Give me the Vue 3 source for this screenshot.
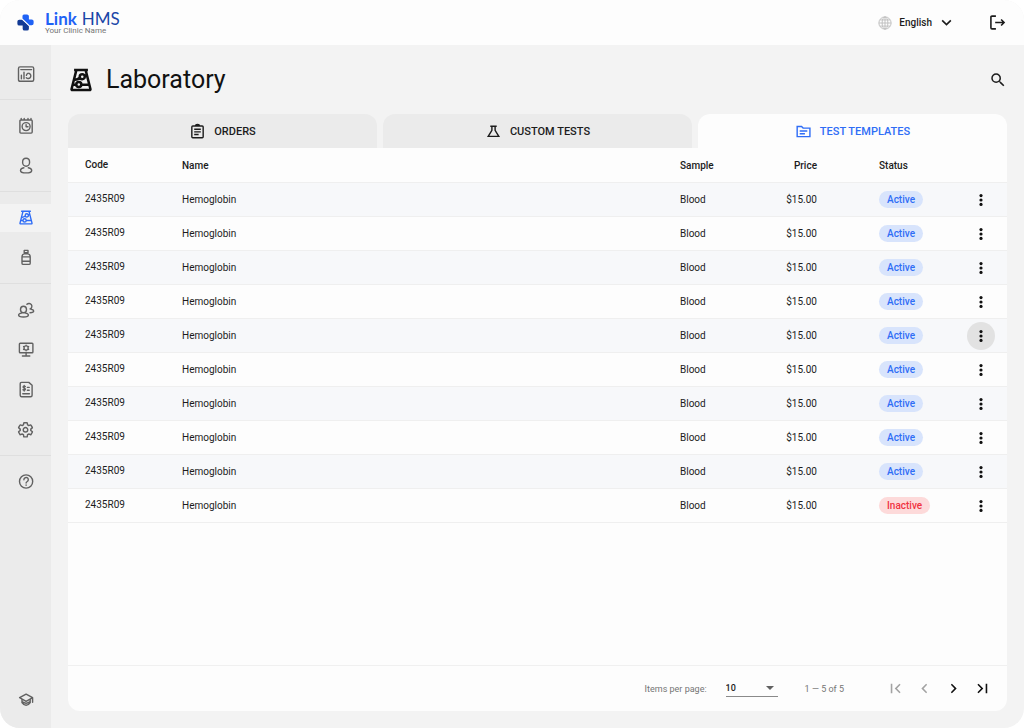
<template>
  <div class="app">
    <header class="topbar">
      <a href="#" class="brand">
        <svg class="brand-mark" viewBox="0 0 18 18">
          <path fill="#1f62f5" d="M7.4 0.400h3.200a2 2 0 0 1 2 2v3.400h3a2 2 0 0 1 2 2v2a2 2 0 0 1-2 2h-3L5.800 5.400V2a1.600 1.600 0 0 1 1.600-1.600z" />
          <path fill="#123a94" d="M2.400 6h3.200l7 6.400v3.200a2 2 0 0 1-2 2H8a2 2 0 0 1-2-2v-3.400H2.400a2 2 0 0 1-2-2V8a2 2 0 0 1 2-2z" />
          <path stroke="#fff" stroke-width="1.100" d="M5.300 5.200l7.600 7" />
        </svg>
        <span class="brand-text">
          <span class="brand-name"><b>Link</b><span>HMS</span></span>
          <span class="brand-sub">Your Clinic Name</span>
        </span>
      </a>
      <div class="topbar-actions">
        <button type="button" class="lang-button">
          <svg class="globe" viewBox="0 0 16 16">
            <circle cx="8" cy="8" r="7" />
            <ellipse cx="8" cy="8" rx="3.300" ry="7" />
            <path d="M8 1v14M1 8h14M2.200 4.500h11.600M2.200 11.500h11.600" />
          </svg>
          <span>English</span>
          <svg class="caret" viewBox="0 0 12 12"><path d="M2 4l4 4 4-4" /></svg>
        </button>
        <button type="button" class="icon-button" aria-label="Log out">
          <svg class="logout" viewBox="0 0 16 16">
            <path d="M6.500 2H2.800a1 1 0 0 0-1 1v10a1 1 0 0 0 1 1h3.700M5.800 8h8.400M11.400 5.200L14.200 8l-2.800 2.800" />
          </svg>
        </button>
      </div>
    </header>

    <div class="body">
      <nav class="sidebar">
        <div v-for="(group, i) in navGroups" :key="i" class="nav-group">
          <a
            v-for="item in group"
            :key="item.label"
            href="#"
            class="nav-item"
            :class="{ active: item.active }"
            :aria-label="item.label"
          >
            <svg class="nav-icon" :class="{ large: item.box }" :viewBox="item.box || '0 0 18 18'">
              <path :d="item.icon" />
            </svg>
          </a>
        </div>
      </nav>

      <main class="content">
        <div class="page-head">
          <svg class="page-icon" viewBox="2 1 14 15"><path :d="flask" /></svg>
          <h1>Laboratory</h1>
          <button type="button" class="icon-button search" aria-label="Search">
            <svg viewBox="0 0 24 24"><path d="M15.5 14h-.79l-.28-.27A6.471 6.471 0 0 0 16 9.5 6.5 6.5 0 1 0 9.5 16c1.61 0 3.09-.59 4.23-1.57l.27.28v.79l5 4.99L20.490 19l-4.990-5zm-6 0C7.010 14 5 11.990 5 9.500S7.010 5 9.500 5 14 7.010 14 9.500 11.990 14 9.500 14z" /></svg>
          </button>
        </div>

        <div class="tabs" role="tablist">
          <button
            v-for="tab in tabs"
            :key="tab.id"
            type="button"
            role="tab"
            class="tab"
            :class="{ active: tab.id === activeTab }"
            :aria-selected="tab.id === activeTab"
            @click="activeTab = tab.id"
          >
            <svg class="tab-icon" viewBox="0 0 18 18"><path :d="tab.icon" /></svg>
            <span>{{ tab.label }}</span>
          </button>
        </div>

        <section class="card">
          <table class="tests">
            <thead>
              <tr>
                <th class="col-code">Code</th>
                <th class="col-name">Name</th>
                <th class="col-sample">Sample</th>
                <th class="col-price">Price</th>
                <th class="col-status">Status</th>
                <th class="col-menu"></th>
              </tr>
            </thead>
            <tbody>
              <tr v-for="row in rows" :key="row.id">
                <td class="col-code">{{ row.code }}</td>
                <td class="col-name">{{ row.name }}</td>
                <td class="col-sample">{{ row.sample }}</td>
                <td class="col-price">{{ row.price }}</td>
                <td class="col-status">
                  <span class="badge" :class="row.status.toLowerCase()">{{ row.status }}</span>
                </td>
                <td class="col-menu">
                  <button type="button" class="row-menu" :class="{ focused: row.id === 5 }" aria-label="Row menu">
                    <svg viewBox="0 0 14 14">
                      <circle cx="7" cy="2.600" r="1.600" />
                      <circle cx="7" cy="7" r="1.600" />
                      <circle cx="7" cy="11.400" r="1.600" />
                    </svg>
                  </button>
                </td>
              </tr>
            </tbody>
          </table>

          <footer class="pager">
            <label for="page-size">Items per page:</label>
            <div class="select">
              <select id="page-size" v-model="pageSize">
                <option>10</option>
                <option>25</option>
                <option>50</option>
              </select>
              <svg viewBox="0 0 8 4"><path d="M0 0h8L4 4z" /></svg>
            </div>
            <span class="range">1 — 5 of 5</span>
            <div class="pager-buttons">
              <button v-for="btn in pagerButtons" :key="btn.label" type="button" :disabled="btn.disabled" :aria-label="btn.label">
                <svg viewBox="0 0 24 24"><path :d="btn.icon" /></svg>
              </button>
            </div>
          </footer>
        </section>
      </main>
    </div>
  </div>
</template>

<script setup>
import { ref } from 'vue';

const flask =
  'M4.600 2.200h8.800M6 2.400L3 14.200c-.1.400.1.700.5.700h11c.4 0 .6-.3.500-.7L12 2.400M11.400 6.400a1.600 1.600 0 1 1-3.200 0 1.600 1.600 0 1 1 3.200 0M9.200 11.400a1.600 1.600 0 1 1-3.200 0 1.600 1.600 0 1 1 3.200 0M9.200 11.500h4.600M4.200 11.500H6M5.200 8.400c1.400 0 2-.4 3-1.300M11.400 6.200l1-1';

const navGroups = [
  [
    {
      label: 'Dashboard',
      icon: 'M3 1.900h12.200q1.500 0 1.500 1.500v11.400q0 1.500-1.500 1.500H3q-1.500 0-1.500-1.500V3.400q0-1.500 1.500-1.500M3.800 4.600h10.800M4.400 10.300v3.500M7 7.300v6.500M11.800 8.200a2.700 2.700 0 1 1-2.500 4.600M9.400 10.300q.3-1.300 1.400-1.900',
    },
  ],
  [
    {
      label: 'Appointments',
      icon: 'M3.900 3h10.300q1 0 1 1v11.100q0 1-1 1H3.900q-1 0-1-1V4q0-1 1-1M4.200 1.500V3M7.200 1.500V3M11 1.500V3M14 1.500V3M13.100 9.600a4 4 0 1 1-8 0 4 4 0 1 1 8 0M9.100 7.600v2.200h1.900',
    },
    {
      label: 'Patients',
      icon: 'M12.600 5.200c0 2.200-1.500 4-3.500 4s-3.500-1.800-3.500-4 1.500-3.900 3.500-3.900 3.500 1.700 3.500 3.900M6.900 10.800c-2 .4-3.400 1.400-3.400 2.600 0 1.600 2.600 2.500 5.600 2.500s5.600-.9 5.600-2.500c0-1.200-1.400-2.200-3.400-2.600',
    },
  ],
  [
    { label: 'Laboratory', active: true, icon: flask },
    {
      label: 'Pharmacy',
      icon: 'M7.200 1.400h3.800v2.400H7.200zM7 4.900h4.200q2 .6 2 2.800v6.500q0 1.200-1.200 1.200H6.200q-1.200 0-1.200-1.200V7.700q0-2.200 2-2.800M5 7.900h8.200M5 12.300h8.200',
    },
  ],
  [
    {
      label: 'Staff',
      icon: 'M9.500 8.500a3 3.200 0 1 1-6 0 3 3.200 0 1 1 6 0M4.500 12.100c-1.900.3-2.900 1-2.900 1.900 0 1.300 2.200 2 4.900 2s4.900-.7 4.900-2c0-.9-1-1.600-2.900-1.900M9.900 3.300a2.900 2.900 0 1 1 3.200 4.700M14.300 8.200c1.500.3 2.400 1 2.400 1.800 0 1-1.500 1.700-3.700 1.700',
    },
    {
      label: 'Devices',
      icon: 'M3.200 2.300h11.900q.8 0 .8.800v7.800q0 .8-.8.800H3.200q-.8 0-.8-.8V3.100q0-.8.800-.8M9.100 11.800v3M5.400 15h7.400M11.200 7a2.100 2.100 0 1 1-4.200 0 2.100 2.100 0 1 1 4.200 0M9.100 4.200v.7M9.100 9.100v.7M6.600 5.600l.6.300M11 8.100l.6.300M6.600 8.400l.6-.3M11 5.900l.6-.3',
    },
    {
      label: 'Billing',
      icon: 'M4.500 1.400h7.300l3.300 2.900v10q0 1.500-1.500 1.500H4.700q-1.500 0-1.500-1.500V2.900q0-1.500 1.300-1.500M5.800 12.700h6.600M10.400 6.400h1.800M10.400 9.200h1.800M8.300 5.600c-.6-.6-2.200-.5-2.200.5 0 1.200 2.300.8 2.300 2.100 0 1.100-1.700 1.200-2.400.5M7.200 4.400v5.600',
    },
    {
      label: 'Settings',
      box: '0 1 24 24',
      icon: 'M19.430 12.980c.04-.32.07-.64.07-.98 0-.34-.03-.66-.07-.98l2.110-1.650c.19-.15.24-.42.12-.64l-2-3.460c-.09-.16-.26-.25-.44-.25-.06 0-.12.01-.17.03l-2.490 1c-.52-.4-1.080-.73-1.690-.98l-.38-2.650C14.460 2.180 14.250 2 14 2h-4c-.25 0-.46.18-.49.42l-.38 2.650c-.61.25-1.170.59-1.690.98l-2.490-1c-.06-.02-.12-.03-.18-.03-.17 0-.34.09-.43.25l-2 3.460c-.13.22-.07.49.12.64l2.110 1.650c-.04.32-.07.65-.07.98 0 .33.03.66.07.98l-2.110 1.650c-.19.15-.24.42-.12.64l2 3.460c.09.16.26.25.44.25.06 0 .12-.01.17-.03l2.490-1c.52.4 1.080.73 1.690.98l.38 2.650c.03.24.24.42.49.42h4c.25 0 .46-.18.49-.42l.38-2.650c.61-.25 1.170-.59 1.690-.98l2.490 1c.06.02.12.03.18.03.17 0 .34-.09.43-.25l2-3.460c.12-.22.07-.49-.12-.64zM15.200 12a3.200 3.200 0 1 1-6.400 0 3.200 3.200 0 1 1 6.400 0',
    },
  ],
  [
    {
      label: 'Help',
      icon: 'M15.700 8.500a6.600 6.600 0 1 1-13.200 0 6.600 6.600 0 1 1 13.200 0M6.900 6.700a2.200 2.200 0 1 1 3.400 1.800c-.8.500-1.200.9-1.200 1.500M9.100 12v.2',
    },
  ],
  [
    {
      label: 'Academy',
      icon: 'M9.100 3.200l6.500 3.500-6.500 3.600-6.500-3.600zM5 8.100v3.600c1 1.600 2.400 2.500 4.100 2.500s3.100-.9 4.100-2.500V8.100M15.600 6.800v4.400M5 10.600c2.600 2 5.600 2 8.200 0',
    },
  ],
];

const tabs = [
  {
    id: 'orders',
    label: 'ORDERS',
    icon: 'M4 3.200h10q1 0 1 1v10.400q0 1-1 1H4q-1 0-1-1V4.200q0-1 1-1M7 3.200a2 1.700 0 0 1 4 0M5.500 6.600h7M5.500 9.400h7M5.500 12.200h4.700',
  },
  {
    id: 'custom',
    label: 'CUSTOM TESTS',
    icon: 'M5.600 3.500h6.800M7.300 3.600v4.200L3.400 14.200h11.200l-3.900-6.400V3.600',
  },
  {
    id: 'templates',
    label: 'TEST TEMPLATES',
    icon: 'M2.300 3.700h4.600l1.700 1.700h7.200v9H2.300zM5 8.400h8M5 11.300h5.500',
  },
];
const activeTab = ref('templates');

const rows = Array.from({ length: 10 }, (_, i) => ({
  id: i + 1,
  code: '2435R09',
  name: 'Hemoglobin',
  sample: 'Blood',
  price: '$15.00',
  status: i === 9 ? 'Inactive' : 'Active',
}));

const pageSize = ref('10');
const pagerButtons = [
  { label: 'First page', disabled: true, icon: 'M18.410 16.590L13.820 12l4.590-4.590L17 6l-6 6 6 6zM6 6h2v12H6z' },
  { label: 'Previous page', disabled: true, icon: 'M15.410 7.410L14 6l-6 6 6 6 1.410-1.410L10.830 12z' },
  { label: 'Next page', disabled: false, icon: 'M10 6L8.590 7.410 13.170 12l-4.580 4.590L10 18l6-6z' },
  { label: 'Last page', disabled: false, icon: 'M5.590 7.410L10.180 12l-4.590 4.590L7 18l6-6-6-6zM16 6h2v12h-2z' },
];
</script>

<style>
body {
  background: #fff;
}
</style>

<style scoped>
.app {
  display: flex;
  flex-direction: column;
  min-height: 100vh;
  border-radius: 20px;
  overflow: hidden;
  background: #f3f3f3;
  color: #1c1c1c;
  font-family: Roboto, sans-serif;
  font-size: 11px;
}

button {
  font-family: inherit;
  border: none;
  padding: 0;
  background: none;
  color: inherit;
  cursor: pointer;
}

svg {
  display: block;
}

.topbar {
  display: flex;
  align-items: center;
  justify-content: space-between;
  height: 45px;
  padding: 0 18px 0 17px;
  background: #fdfdfd;
}

.brand {
  display: flex;
  align-items: center;
  gap: 11px;
  text-decoration: none;
}

.brand-mark {
  width: 17px;
  height: 17px;
  fill: none;
}

.brand-text {
  display: flex;
  flex-direction: column;
}

.brand-name {
  display: flex;
  gap: 5px;
  font-family: Lato, sans-serif;
  font-size: 17px;
  line-height: 16px;
  color: #1a46a8;
}

.brand-name b {
  color: #1f62f5;
}

.brand-sub {
  font-size: 8px;
  line-height: 8px;
  color: #757575;
}

.topbar-actions {
  display: flex;
  align-items: center;
  gap: 36px;
}

.lang-button {
  display: flex;
  align-items: center;
  gap: 7px;
  font-size: 10px;
  font-weight: 500;
}

.globe {
  width: 14px;
  height: 14px;
  fill: none;
  stroke: #bababa;
}

.caret {
  width: 13px;
  height: 13px;
  margin-left: 1px;
  fill: none;
  stroke: #1c1c1c;
  stroke-width: 1.5;
}

.logout {
  width: 17px;
  height: 17px;
  fill: none;
  stroke: #1c1c1c;
  stroke-width: 1.5;
}

.body {
  display: flex;
  flex: 1;
}

.sidebar {
  display: flex;
  flex-direction: column;
  flex: none;
  width: 51px;
  background: #ebebeb;
}

.nav-group {
  display: flex;
  flex-direction: column;
  gap: 12px;
  padding: 12px 0 11px;
  border-bottom: 1px solid #dfdfdf;
}

.nav-group:first-child {
  padding-top: 15px;
}

.nav-group:nth-last-child(-n + 2) {
  border-bottom: none;
}

.nav-group:last-child {
  margin-top: auto;
  padding-bottom: 14px;
}

.nav-item {
  display: flex;
  align-items: center;
  justify-content: center;
  height: 28px;
  color: #616161;
}

.nav-item.active {
  background: #f3f3f3;
  color: #2f6df6;
}

.nav-icon {
  width: 18px;
  height: 18px;
  fill: none;
  stroke: currentColor;
  stroke-width: 1.4;
  stroke-linecap: round;
  stroke-linejoin: round;
}

.nav-icon.large {
  width: 17px;
  height: 17px;
  stroke-width: 2;
}

.content {
  display: flex;
  flex-direction: column;
  flex: 1;
  min-width: 0;
  padding: 0 17px 17px;
}

.page-head {
  display: flex;
  align-items: center;
  gap: 14px;
  height: 69px;
  padding-left: 2px;
}

.page-icon {
  width: 22px;
  height: 24px;
  fill: none;
  stroke: #111;
  stroke-width: 1.6;
  stroke-linejoin: round;
}

h1 {
  margin: 0;
  font-size: 25px;
  font-weight: 400;
  color: #111;
}

.search {
  margin-left: auto;
}

.search svg {
  width: 18px;
  height: 18px;
  fill: #1c1c1c;
}

.tabs {
  display: grid;
  grid-template-columns: repeat(3, 1fr);
  gap: 6px;
}

.tab {
  display: flex;
  align-items: center;
  justify-content: center;
  gap: 8px;
  height: 34px;
  border-radius: 12px 12px 0 0;
  background: #ebebeb;
  font-size: 11px;
  font-weight: 500;
}

.tab.active {
  background: #fdfdfd;
  color: #2f6df6;
}

.tab-icon {
  width: 17px;
  height: 17px;
  fill: none;
  stroke: currentColor;
  stroke-width: 1.5;
}

.card {
  display: flex;
  flex-direction: column;
  justify-content: space-between;
  flex: 1;
  border-radius: 0 0 12px 12px;
  background: #fdfdfd;
}

.tests {
  width: 100%;
  table-layout: fixed;
  border-collapse: separate;
  border-spacing: 0;
}

.tests th,
.tests td {
  height: 33px;
  padding: 0;
  border-bottom: 1px solid #efefef;
  text-align: left;
  vertical-align: middle;
}

.tests th {
  height: 34px;
  font-size: 10px;
  font-weight: 500;
}

.tests td {
  font-size: 10px;
}

.tests tbody tr:nth-child(odd) {
  background: #f7f8fa;
}

.tests .col-code {
  width: 97px;
  padding: 0 0 2px 17px;
  height: 31px;
}

.col-sample {
  width: 80px;
}

.tests .col-price {
  width: 57px;
  text-align: right;
}

.tests .col-status {
  width: 76px;
  padding-left: 62px;
}

.tests .col-menu {
  width: 52px;
}

.badge {
  display: block;
  width: fit-content;
  padding: 0 8px;
  border-radius: 9px;
  font-size: 10px;
  font-weight: 500;
  line-height: 17px;
}

.badge.active {
  background: #d8e4fc;
  color: #2f6df6;
}

.badge.inactive {
  background: #fddada;
  color: #f0323f;
}

.row-menu {
  display: flex;
  align-items: center;
  justify-content: center;
  width: 28px;
  height: 28px;
  margin: 0 auto;
  border-radius: 50%;
}

.row-menu.focused {
  background: #e2e2e2;
}

.row-menu svg {
  width: 14px;
  height: 14px;
  fill: #111;
}

.pager {
  display: flex;
  align-items: center;
  justify-content: flex-end;
  height: 45px;
  padding-right: 10px;
  border-top: 1px solid #f0f0f0;
  font-size: 9px;
  color: #757575;
}

.select {
  display: grid;
  align-items: center;
  width: 52px;
  margin: 0 27px 0 19px;
  border-bottom: 1px solid #8a8a8a;
}

.select select {
  grid-area: 1 / 1;
  height: 16px;
  padding: 0;
  border: none;
  appearance: none;
  background: none;
  color: #1c1c1c;
  font-family: inherit;
  font-size: 9px;
  font-weight: 500;
}

.select svg {
  grid-area: 1 / 1;
  justify-self: end;
  width: 8px;
  height: 4px;
  margin-right: 4px;
  fill: #616161;
  pointer-events: none;
}

.pager-buttons {
  display: flex;
  margin-left: 37px;
}

.pager-buttons button {
  display: flex;
  align-items: center;
  justify-content: center;
  width: 29px;
  height: 29px;
  color: #111;
}

.pager-buttons button:disabled {
  color: #a3a3a3;
}

.pager-buttons svg {
  width: 19px;
  height: 19px;
  fill: currentColor;
}
</style>
